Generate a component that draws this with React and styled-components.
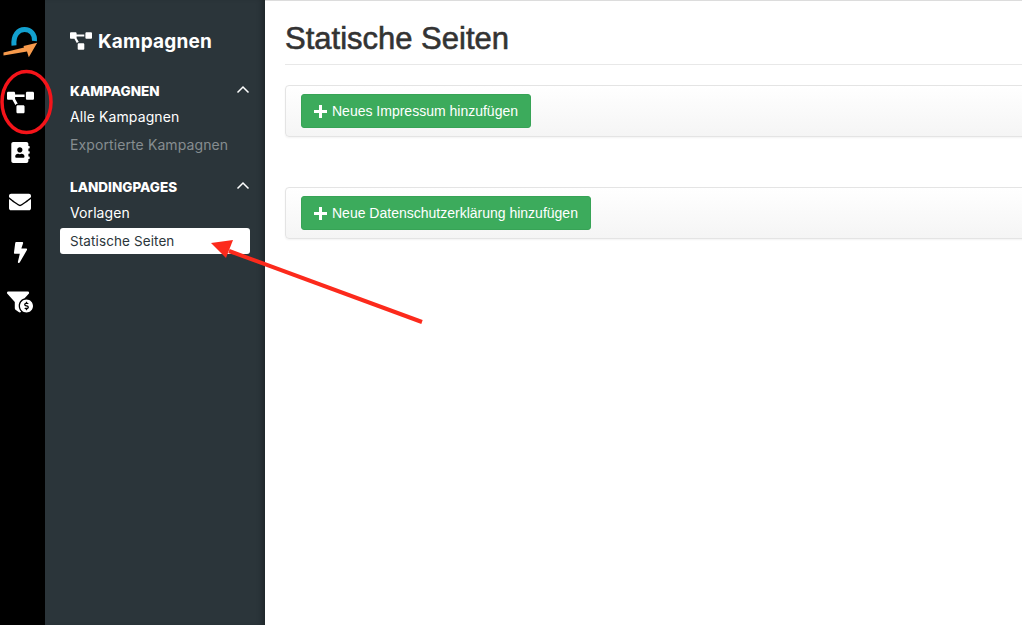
import styled, { createGlobalStyle } from 'styled-components';
import { FaAddressBook, FaBolt, FaEnvelope, FaFunnelDollar, FaProjectDiagram } from 'react-icons/fa';

const GlobalStyle = createGlobalStyle`
  html, body {
    margin: 0;
    padding: 0;
    height: 100%;
    background: #fff;
    overflow: hidden;
  }
  * {
    box-sizing: border-box;
  }
`;

const Page = styled.div`
  position: relative;
  display: flex;
  width: 1022px;
  height: 625px;
  overflow: hidden;
`;

const Rail = styled.nav`
  display: flex;
  flex-direction: column;
  align-items: center;
  flex: 0 0 45px;
  padding-top: 26px;
  background: #000;
  color: #fff;
`;

const RailItem = styled.div`
  display: flex;
  justify-content: center;
  align-items: center;
  width: 100%;
  height: 50px;
  padding-right: 5px;
  font-size: ${(p) => p.$size || 22}px;
`;

const Logo = styled.svg`
  display: block;
  width: 40px;
  height: 32px;
  margin-bottom: 19px;
`;

const Sidebar = styled.aside`
  flex: 0 0 220px;
  padding: 27px 15px 0;
  background: #2b353a;
  box-shadow: inset -6px 0 6px -4px rgba(0, 0, 0, 0.35);
  color: #fff;
  font-family: Inter, 'Open Sans', sans-serif;
`;

const SidebarTitle = styled.h2`
  display: flex;
  align-items: center;
  gap: 6px;
  height: 28px;
  margin: 0 0 26px 10px;
  font-size: 19px;
  letter-spacing: 0.2px;
  font-weight: 700;
  svg {
    font-size: 22px;
  }
`;

const Section = styled.section`
  margin-bottom: 20px;
`;

const SectionHead = styled.div`
  display: flex;
  justify-content: space-between;
  align-items: center;
  height: 20px;
  margin-bottom: 1px;
  padding: 0 0 0 10px;
  font-size: 13.5px;
  font-weight: 800;
  svg {
    display: block;
    width: 14px;
    height: 9px;
    margin-bottom: 3px;
  }
`;

const NavItem = styled.div`
  display: flex;
  align-items: center;
  width: 190px;
  height: 26px;
  margin-top: ${(p) => (p.$active ? 3 : 2)}px;
  padding-left: 10px;
  border-radius: 3px;
  font-size: ${(p) => (p.$active ? 13.5 : 14)}px;
  letter-spacing: 0.1px;
  font-weight: 400;
  background: ${(p) => (p.$active ? '#fff' : 'transparent')};
  color: ${(p) => (p.$active ? '#2b353a' : p.$muted ? '#868d90' : '#fff')};
`;

const Main = styled.main`
  flex: 1;
  min-width: 0;
  padding: 0 0 0 20px;
  border-top: 1px solid #dcdcdc;
  font-family: 'Liberation Sans', Arial, sans-serif;
  color: #333;
`;

const PageHeader = styled.h1`
  height: 64px;
  margin: 0 0 20px;
  padding-top: 21px;
  border-bottom: 1px solid #e8e8e8;
  font-size: 31px;
  line-height: 34px;
  font-weight: 500;
  -webkit-text-stroke: 0.6px #333;
`;

const Toolbar = styled.div`
  display: flex;
  align-items: center;
  width: 760px;
  height: 52px;
  margin-bottom: 50px;
  padding-left: 15px;
  border: 1px solid #e4e4e4;
  border-radius: 4px;
  background: linear-gradient(#fff, #f5f5f5);
  box-shadow: 0 1px 2px rgba(0, 0, 0, 0.05);
`;

const AddButton = styled.button`
  display: flex;
  align-items: center;
  gap: 5px;
  height: 34px;
  padding: 0 12px;
  border: 1px solid #37a356;
  border-radius: 3px;
  background: #3cab5c;
  color: #fff;
  font-family: inherit;
  font-size: 14px;
  svg {
    display: block;
    width: 13px;
    height: 13px;
  }
`;

const Annotations = styled.svg`
  position: absolute;
  top: 0;
  left: 0;
  width: 1022px;
  height: 625px;
  pointer-events: none;
`;

const PlusIcon = () => (
  <svg viewBox="0 0 13 13">
    <path d="M5 0h3v5h5v3H8v5H5V8H0V5h5z" fill="#fff" />
  </svg>
);

const Chevron = () => (
  <svg viewBox="0 0 14 9">
    <path d="M1.5 7.5 7 2l5.5 5.5" fill="none" stroke="#fff" strokeWidth="1.5" />
  </svg>
);

export default function App() {
  return (
    <Page>
      <GlobalStyle />
      <Rail>
        <Logo viewBox="2.5 26 40 32">
          <path d="M13.5 45.5C12.5 35 18 29.5 24 29.5 30 29.5 34.5 34 34 41" fill="none" stroke="#12a0cf" strokeWidth="5" />
          <path d="M3 52.5 23.5 47.5 23 46 36.7 42.7 28.3 57.3 26.5 51.5 3 55.5z" fill="#f79a4c" />
        </Logo>
        <RailItem $size={27}><FaProjectDiagram /></RailItem>
        <RailItem $size={21}><FaAddressBook /></RailItem>
        <RailItem $size={22}><FaEnvelope /></RailItem>
        <RailItem $size={21}><FaBolt /></RailItem>
        <RailItem $size={26}><FaFunnelDollar /></RailItem>
      </Rail>
      <Sidebar>
        <SidebarTitle><FaProjectDiagram />Kampagnen</SidebarTitle>
        <Section>
          <SectionHead>KAMPAGNEN<Chevron /></SectionHead>
          <NavItem>Alle Kampagnen</NavItem>
          <NavItem $muted>Exportierte Kampagnen</NavItem>
        </Section>
        <Section>
          <SectionHead>LANDINGPAGES<Chevron /></SectionHead>
          <NavItem>Vorlagen</NavItem>
          <NavItem $active>Statische Seiten</NavItem>
        </Section>
      </Sidebar>
      <Main>
        <PageHeader>Statische Seiten</PageHeader>
        <Toolbar>
          <AddButton><PlusIcon />Neues Impressum hinzufügen</AddButton>
        </Toolbar>
        <Toolbar>
          <AddButton><PlusIcon />Neue Datenschutzerklärung hinzufügen</AddButton>
        </Toolbar>
      </Main>
      <Annotations viewBox="0 0 1022 625">
        <ellipse cx="26.5" cy="102" rx="24.5" ry="30.5" fill="none" stroke="#f5141a" strokeWidth="3.5" />
        <path d="M422 322 229 251" stroke="#fc2a1c" strokeWidth="4" fill="none" />
        <path d="M211 243 233 240 226 258z" fill="#fc2a1c" />
      </Annotations>
    </Page>
  );
}
